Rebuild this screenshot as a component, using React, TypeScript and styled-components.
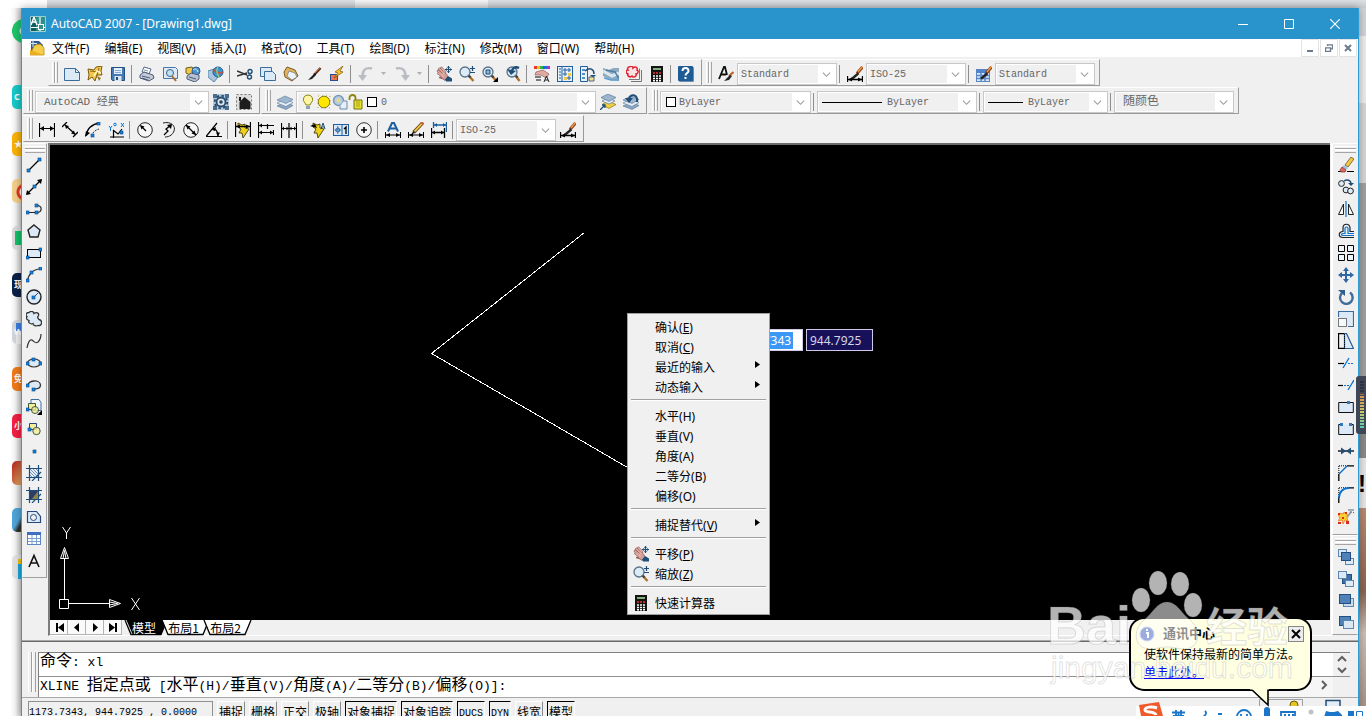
import React from "react";
import styled, { createGlobalStyle, css } from "styled-components";

const face = "#f0f0f0";
const uiFont = '"Noto Sans", "Noto Sans CJK SC", sans-serif';
const songFont = '"Liberation Mono", "Noto Sans CJK SC", monospace';

const GlobalStyle = createGlobalStyle`
  * { box-sizing: border-box; }
  body { margin: 0; background: #fff; font-family: ${uiFont}; font-size: 12px; color: #000; }
  button, select, input { font: inherit; color: inherit; margin: 0; padding: 0; border: 0; background: none; border-radius: 0; }
  svg { display: block; flex: none; }
`;

/* ---------- icons, all on a 16 x 16 grid ---------- */

const navy = "#1f4e79";
const blue = "#0b72d0";
const pale = "#dce9f6";
const gold = "#f2c84b";

const Dot = ({ x, y }: { x: number; y: number }) => (
  <rect x={x} y={y} width="3" height="3" fill="#1287ea" stroke="#07427c" strokeWidth=".6" />
);
const Lens = ({ x = 6, y = 6, r = 5 }: { x?: number; y?: number; r?: number }) => (
  <>
    <path d={`M${x + r * 0.7} ${y + r * 0.7}L14.5 15`} stroke="#b0702a" strokeWidth="2.4" />
    <path d={`M${x + r * 0.7} ${y + r * 0.7}l2 2`} stroke="#444" strokeWidth="2.4" />
    <circle cx={x} cy={y} r={r} fill="#d9ecf8" stroke="#5d7186" strokeWidth="1.3" />
  </>
);
const Brush = () => (
  <>
    <path d="M15.5 1L10 7.5" stroke="#8a3b12" strokeWidth="3" />
    <path d="M15.5 .5L11 6" stroke="#f2a04a" strokeWidth="1.2" />
    <path d="M10.5 6.5L4 12l2 1.5 6-5z" fill="#222" />
  </>
);
const DimLine = ({ y = 13 }: { y?: number }) => (
  <>
    <path d={`M.5 ${y - 3}v6M15.5 ${y - 3}v6M1 ${y}h14`} stroke="#000" />
    <path d={`M1 ${y}l4-2v4zM15 ${y}l-4-2v4z`} />
  </>
);
const Pencil = () => (
  <>
    <path d="M14.5 1L6 10" stroke="#6b4a12" strokeWidth="3.4" />
    <path d="M14 1.5L6.5 9.5" stroke={gold} strokeWidth="1.8" />
    <path d="M15.5 2L13 0" stroke="#d0574b" strokeWidth="2" />
    <path d="M5 8.500L4 12l3.500-1z" fill="#222" />
  </>
);
const Bolt = () => <path d="M3 1l4 2 3-1 0 4 4 1-6 9-1-5-3 0 2-4-3-2z" fill="#ecd21c" stroke="#463b05" strokeWidth=".9" />;
const Layers = () => (
  <>
    <path d="M8 8l8 3.500-7 4L0 12z" fill="#8aa5c2" stroke="#5a7896" strokeWidth=".6" />
    <path d="M8 5l8 3.500-7 4L0 9z" fill="#e6edf5" stroke="#5a7896" strokeWidth=".6" />
    <path d="M8 2l8 3.500-7 4L0 6z" fill="#9db6cf" stroke="#5a7896" strokeWidth=".6" />
  </>
);
const Hatch = ({ fill }: { fill: string }) => (
  <>
    <rect x="3" y="3" width="10" height="10" fill={fill} />
    <path d="M0 3.500h16M0 12.500h16M3.500 0v16M12.500 0v16M6 16L15 7" stroke={navy} strokeWidth="1.2" fill="none" />
  </>
);
const Hand = () => (
  <>
    <g strokeLinecap="round" fill="none">
      <path d="M5.500 2L9 6M3.500 3L8 7.500M2 5l5 4M2.500 7.500L7 10.500" stroke="#96605a" strokeWidth="2.600" />
      <path d="M4 11.500l6 1.500" stroke="#96605a" strokeWidth="2" />
    </g>
    <path d="M7 5.500l4 3 1 3-3 3-4-3z" fill="#d39e96" stroke="#96605a" strokeWidth=".7" />
    <path d="M5.500 2L9 6M3.500 3L8 7.500M2 5l5 4M2.500 7.500L7 10.500" stroke="#e3b2aa" strokeWidth="1.300" strokeLinecap="round" fill="none" />
    <path d="M9 13.500l3-3.500 4 2.500v3h-6z" fill={navy} />
    <path d="M12.500 0v7M9 3.500h7" stroke={navy} strokeWidth="1.200" />
    <path d="M12.500 0l1.500 2h-3zM12.500 7l1.500-2h-3zM9 3.500l2-1.500v3zM16 3.500l-2-1.500v3z" fill={navy} />
  </>
);
const Calc = () => (
  <>
    <rect x="2" y="0" width="12" height="16" fill="#141414" />
    <rect x="4" y="2" width="8" height="2" fill="#7fae7f" />
    <path d="M4 7h2M7 7h2M10 7h2" stroke="#e33" strokeWidth="1.600" />
    <path d="M4 10h2M7 10h2M10 10h2M4 12.500h2M7 12.500h2M10 12.500h2M4 14.700h2M7 14.700h2M10 14.700h2" stroke="#fff" strokeWidth="1.400" />
  </>
);
const OrderBack = () => (
  <>
    <rect x=".5" y=".5" width="8" height="7" fill={pale} stroke="#5d87b0" />
    <rect x="7.500" y="9.500" width="8" height="6" fill={pale} stroke="#5d87b0" />
  </>
);

const glyphs: Record<string, React.ReactNode> = {
  app: (
    <>
      <rect width="16" height="16" fill="#0e5d63" />
      <rect x="6" y="0" width="10" height="16" fill="#2f8f8b" />
      <path d="M1 9L4 1l3 8M2 6h4" stroke="#fff" strokeWidth="1.500" fill="none" />
      <path d="M10 0v16M0 11.500h16" stroke="#fff" strokeWidth="1.200" />
      <rect x="8.500" y="8.500" width="5" height="5" fill="#2f8f8b" stroke="#fff" />
      <path d="M.5 .5h15v15h-15z" stroke="#9fd0d0" fill="none" />
    </>
  ),
  drawing: (
    <>
      <path d="M2 1h8l4 4v9H2z" fill="#315a8c" />
      <path d="M4 0v7M0 3.500h8" stroke="#d7e7f7" />
      <path d="M5 6c4-3 8-2 10 2v7H1z" fill="#f5cf4a" stroke="#c08e10" strokeWidth=".8" />
      <path d="M1 10l14 5H1z" fill="#e9ae1a" />
    </>
  ),
  newdoc: <path d="M.5 2.500h11l4 4v8H.500zM11.500 2.500v4h4" fill={pale} stroke="#3c6c9c" />,
  open: (
    <>
      <path d="M1 3l6 1 2-3 6-1-1 5 1 4-5 0-2 6-3-4-4 3 1-5z" fill={gold} stroke="#7d5a10" />
      <path d="M3 5l8 1-2 6M12 2l-2 7" stroke="#8c6a1a" fill="none" />
      <path d="M7 10l3-5 4 2" stroke="#fff3c4" fill="none" strokeWidth="1.500" />
      <path d="M10 10l4 2-2 3z" fill="#9a7420" />
    </>
  ),
  save: (
    <>
      <path d="M1.500 1.500h13v13h-12l-1-1z" fill="#4779b5" stroke="#244f82" />
      <rect x="4" y="2" width="8" height="6" fill="#e3effa" />
      <path d="M5 4.500h6M5 6.500h6" stroke="#86a9cc" />
      <rect x="4.500" y="10" width="7" height="5" fill="#dfe7ee" />
      <rect x="6" y="11" width="2" height="3" fill={navy} />
    </>
  ),
  print: (
    <>
      <path d="M3 6l2-5 7 2-2 5z" fill="#fff" stroke="#55698a" />
      <path d="M5 4l4 1M4.500 6l4 1" stroke="#8593ab" />
      <path d="M1 9l4-3 9 3 1 3-5 3-9-3z" fill="#c3cbd9" stroke="#4c5a75" />
      <path d="M3 10l8 2M3 12l6 2" stroke="#4c5a75" />
    </>
  ),
  preview: (
    <>
      <path d="M1.500 1.500h12l2 2v9h-14z" fill={pale} stroke="#4878a8" />
      <circle cx="8" cy="7" r="3.500" fill="#bfe2f5" stroke="#41627f" />
      <path d="M10 10l4 5" stroke="#b06a2a" strokeWidth="2" />
    </>
  ),
  publish: (
    <>
      <path d="M1 2l6-1 3 5-5 3-4-2z" fill={gold} stroke="#735a14" />
      <circle cx="11" cy="5" r="4" fill="#4d93cf" stroke="#255c8c" />
      <path d="M8 4c2-2 4-1 5 2" stroke="#e5f3e0" fill="none" />
      <path d="M2 10l4-3 8 2 0 4-4 3-8-3z" fill="#b7c1d2" stroke="#4c5a75" />
      <path d="M4 11l7 2" stroke="#4c5a75" />
    </>
  ),
  dwf: (
    <>
      <path d="M0 5l6-2 4 8-4 5-6-5z" fill="#a9c6df" stroke="#5b87ad" />
      <circle cx="10" cy="6" r="5" fill="#3f8fc9" stroke="#20608f" />
      <path d="M6 4c2 3 6 4 9 2" stroke="#d84a32" strokeWidth="1.500" fill="none" />
      <path d="M10 1c-2 3-1 7 1 10" stroke="#8bd07c" strokeWidth="1.300" fill="none" />
    </>
  ),
  cut: (
    <>
      <path d="M0 5l10 4M0 10l10-3" stroke="#333" strokeWidth="1.400" />
      <circle cx="13" cy="5.500" r="2" fill="none" stroke={navy} strokeWidth="1.400" />
      <circle cx="12.500" cy="11" r="2" fill="none" stroke={navy} strokeWidth="1.400" />
    </>
  ),
  copyclip: (
    <>
      <path d="M.5 1.500h11v9H.500z" fill={pale} stroke="#3c6c9c" />
      <path d="M4.500 5.500h8l3 3v6h-11z" fill={pale} stroke="#3c6c9c" />
    </>
  ),
  paste: (
    <>
      <path d="M4 1l8 3 3 6-6 5-7-4-1-5z" fill="#e0b25a" stroke="#7a5a22" />
      <path d="M6 5l6 2 2 4-5 3-5-4z" fill="#edf3fa" stroke="#7a7f8a" strokeWidth=".8" />
    </>
  ),
  brush: (
    <>
      <path d="M14.500 2L8 9" stroke="#5a2812" strokeWidth="2.500" />
      <path d="M14 2L9 7" stroke="#c9653b" strokeWidth="1" />
      <path d="M9 7L2 14l4-1 4-4z" fill="#1c1c1c" />
    </>
  ),
  block: (
    <>
      <rect x="1.500" y="8.500" width="7" height="6" fill="#e8774f" stroke="#274a9a" />
      <path d="M14 0L6 6l3 1-4 5 9-6-3-1z" fill="#f8c62c" stroke="#7d5208" strokeWidth=".7" />
    </>
  ),
  undo: (
    <>
      <path d="M14 2.500C8 1 4.500 4 4.500 10" stroke="#b9bcc2" strokeWidth="2.400" fill="none" />
      <path d="M0 9h9l-4.500 6z" fill="#b9bcc2" />
    </>
  ),
  redo: (
    <>
      <path d="M2 2.500c6-1.500 9.500 1.500 9.500 7.500" stroke="#b9bcc2" strokeWidth="2.400" fill="none" />
      <path d="M7 9h9l-4.500 6z" fill="#b9bcc2" />
    </>
  ),
  pan: <Hand />,
  zoom: (
    <>
      <Lens />
      <path d="M13.500 0v5M11 2.500h5M11 6.500h5" stroke={navy} strokeWidth="1.200" />
    </>
  ),
  zoomwin: (
    <>
      <Lens />
      <path d="M4 4h4v4H4z" fill="#8fb4d6" stroke={navy} />
      <path d="M16 11v5h-5z" />
    </>
  ),
  zoomprev: (
    <>
      <Lens x={7} />
      <path d="M14 2c-4-2-7 0-7 4" fill="none" stroke={navy} strokeWidth="2.400" />
      <path d="M2 3l4 6 5-4z" fill={navy} />
    </>
  ),
  properties: (
    <>
      <path d="M0 0h3v3H0z" fill="#e33" />
      <path d="M3 0h3v3H3z" fill="#f4c20d" />
      <path d="M6 0h3v3H6z" fill="#2bb24c" />
      <path d="M9 0h4v3H9z" fill="#1e6be0" />
      <path d="M13 0h3v3h-3z" fill="#c128c9" />
      <path d="M2 6l7-2 6 4-3 4-5-3-6 0z" fill="#e0aba2" stroke="#8f5f58" strokeWidth=".7" />
      <path d="M1 11h6M2 14h5" stroke="#555" strokeWidth="1.300" />
      <path d="M10 16l2.500-6 2.500 6M11 14h3" stroke="#222" fill="none" />
    </>
  ),
  design: (
    <>
      <rect x=".5" y=".5" width="15" height="15" fill="#e8f1fa" stroke="#1f5f9f" />
      <path d="M5 1v15" stroke="#1f5f9f" />
      <path d="M2 3h2M2 6h2M2 9h2M2 12h2" stroke="#1f5f9f" strokeWidth="1.200" />
      <path d="M7 3h2v2H7zM11 3h2v2h-2zM7 7h2v2H7zM11 11h2v2h-2z" fill="#fff" stroke="#1f5f9f" />
      <path d="M11 7h3v3h-3zM7 11h3v3H7z" fill={gold} />
    </>
  ),
  palettes: (
    <>
      <path d="M.5 .5h7v15h-7z" fill="#e8f1fa" stroke="#1f5f9f" />
      <path d="M2 3h3v2H2zM2 7h3v2H2zM2 11h3v2H2z" fill="#5b8dbf" />
      <path d="M5 5c5-4 9-2 9 3" stroke={navy} fill="none" strokeWidth="1.500" />
      <path d="M10 9h6l-3 3z" fill={navy} />
      <path d="M9 11h5v4H9z" fill="#f4e08a" stroke="#4b6b8b" />
    </>
  ),
  sheets: (
    <>
      <path d="M0 2l6 2 4-2h6v13l-9-1-7-4z" fill="#8fa9bd" />
      <path d="M0 5l9 5 7-3" stroke="#dbe8f1" strokeWidth="3" fill="none" />
      <path d="M3 4l9 2 4 7" stroke="#4f7fa6" strokeWidth="1.500" fill="none" />
      <path d="M1 12l7 2 8 0" stroke="#5fa0d0" strokeWidth="1.500" fill="none" />
    </>
  ),
  markup: (
    <>
      <path d="M13.500 2.500v11H3M15.500 4v11.500H5" stroke="#777" fill="none" />
      <path d="M3 1c1-1 4-1 4 1 2-2 5-1 4 2 2 1 1 4-1 4 1 3-3 4-4 2-2 2-5 0-4-2-3-1-2-4 0-4-1-1 0-3 1-3z" fill="#fbe3e5" stroke="#e0202c" strokeWidth="1.500" />
    </>
  ),
  calc: <Calc />,
  help: (
    <>
      <rect x="1" y="1" width="15" height="15" rx="1" fill="#6c8db0" />
      <rect x="0" y="0" width="15" height="15" rx="1" fill="#1d5c94" />
      <path d="M4.500 5c0-4 6-4 6 0 0 2-3 2-3 4.500M7.500 11v2" stroke="#fff" strokeWidth="2" fill="none" />
    </>
  ),
  textstyle: (
    <>
      <path d="M1 13L6 1h1l2 8M3 8.500h5" stroke="#111" strokeWidth="1.800" fill="none" />
      <path d="M15.500 6L11 10" stroke="#c0622a" strokeWidth="2.200" />
      <path d="M12 9l-6 6 5-1 3-4z" fill="#222" />
    </>
  ),
  dimstyle: (
    <>
      <Brush />
      <path d="M.5 10v6M15.500 10v6M1 13.500h14" stroke="#000" strokeWidth="1.300" />
      <path d="M1 13.500l4-2v4zM15 13.500l-4-2v4z" />
    </>
  ),
  tablestyle: (
    <>
      <rect x=".5" y="3.500" width="13" height="12" fill="#d9e7f8" stroke="#5b86c4" />
      <path d="M1 4h12v3H1z" fill="#4e83cf" />
      <path d="M1 9.500h12M1 12.500h12M5 7v8M9 7v8" stroke="#5b86c4" strokeWidth="1.500" />
      <Brush />
    </>
  ),
  gear: (
    <>
      <rect width="16" height="16" fill="#b4c8da" />
      <path d="M0 0h4v4H0zM12 0h4v4h-4zM0 12h4v4H0zM12 12h4v4h-4z" fill="#4b6f92" />
      <circle cx="8" cy="8" r="4.500" fill="#dce6ef" stroke="#27496b" strokeWidth="1.800" />
      <circle cx="8" cy="8" r="6.300" fill="none" stroke="#27496b" strokeWidth="1.800" strokeDasharray="2.500 2.400" />
      <circle cx="8" cy="8" r="1.800" fill="#27496b" />
    </>
  ),
  myspace: (
    <>
      <rect x=".5" y=".5" width="15" height="15" fill="#ddd" stroke="#777" strokeDasharray="2 2" />
      <path d="M8.500 3l6 5v7h-11V8z" fill="#1d1d1d" />
      <path d="M3 3h2v4H3z" fill="#1d1d1d" />
    </>
  ),
  layers: <Layers />,
  layercur: (
    <>
      <path d="M8 7l8 3.500-7 4-7-4z" fill="#f0cf45" stroke="#8c7414" strokeWidth=".7" />
      <path d="M8 4l7 3-6 3-7-3z" fill="#eef4fa" stroke="#5a7896" strokeWidth=".7" />
      <path d="M8 0l8 3.500-7 4-8-4z" fill="#9db6cf" stroke="#5a7896" strokeWidth=".7" />
      <path d="M0 16l5-5M2 11h3v3" stroke={navy} strokeWidth="1.300" fill="none" />
    </>
  ),
  layerprev: (
    <>
      <Layers />
      <path d="M14 8C15 0 7-1 6 5" fill="none" stroke={navy} strokeWidth="2" />
      <path d="M2 4h8L6 9z" fill={navy} />
    </>
  ),
  bulb: (
    <>
      <path d="M8 1a4.500 4.500 0 0 1 3 8l-1 2H6L5 9a4.500 4.500 0 0 1 3-8z" fill="#fdf6a4" stroke="#8f8418" />
      <path d="M6 12h4v3H6z" fill="#8da0b4" />
    </>
  ),
  sun: (
    <>
      <path d="M2 2h12v12H2z" fill="none" stroke="#b3a125" strokeDasharray="1 3" />
      <circle cx="8" cy="8" r="5.800" fill="#ffe600" stroke="#8b7c10" />
    </>
  ),
  vpfreeze: (
    <>
      <circle cx="6.500" cy="6.500" r="5" fill="#b3cde4" stroke="#7c97b1" strokeWidth="1.500" />
      <circle cx="6.500" cy="6.500" r="2" fill="#ead978" />
      <path d="M12 7h3v8H8v-3" fill="#e6eef6" stroke="#6c8cab" />
    </>
  ),
  lock: (
    <>
      <path d="M1.500 6V4c0-4 6-4 6 0v4" fill="none" stroke="#8b8712" strokeWidth="1.800" />
      <path d="M6 6h8v9H6z" fill="#e5e02e" stroke="#77730c" />
      <path d="M8 8h4M8 10h4M8 12h4" stroke="#a7a21a" />
    </>
  ),
  dlinear: (
    <>
      <path d="M.5 1v14M15.500 1v14M1 6.500h14" stroke="#000" strokeWidth="1.200" />
      <path d="M1 6.500l4-2.500v5zM15 6.500L11 4v5z" />
    </>
  ),
  daligned: (
    <>
      <path d="M0 5l5-5M11 15l5-5M3 3l10 9" stroke="#000" strokeWidth="1.300" />
      <path d="M3 3l4 1-3 3zM13 12.500l-4-1 3-3z" />
    </>
  ),
  darc: (
    <>
      <path d="M1 14C2 7 7 2 15 1" stroke="#000" fill="none" strokeWidth="1.300" />
      <path d="M7 14c0-3 3-6 7-7" stroke="#333" fill="none" strokeDasharray="2 1" />
      <path d="M0 15l1-6 4 2z" />
      <Dot x={12} y={0} />
      <Dot x={6} y={12} />
    </>
  ),
  dordinate: (
    <>
      <path d="M2 15h14M5.500 8v8M5 8l5 4 4-5" stroke="#000" strokeWidth="1.200" fill="none" />
      <path d="M1 4l1.500 2L4 4M2.500 6v3M13 1l3 4M16 1l-3 4" stroke={blue} fill="none" />
      <circle cx="7" cy="2.500" r="1.300" fill="none" stroke={blue} />
      <Dot x={12} y={9} />
    </>
  ),
  dradius: (
    <>
      <circle cx="8" cy="8" r="7.300" fill="#f7f7f7" stroke="#222" />
      <path d="M4 4l5 5" stroke="#000" strokeWidth="1.300" />
      <path d="M3 3l4.500 1.500L4.500 7.500z" />
    </>
  ),
  djog: (
    <>
      <path d="M3 1c8-2 13 3 11 8-1 3-4 6-9 6" fill="none" stroke="#222" />
      <path d="M4 13l4-4-2-2 5-4" stroke="#000" strokeWidth="1.300" fill="none" />
      <path d="M12 2l-5 1 4 4z" />
    </>
  ),
  ddiam: (
    <>
      <circle cx="8" cy="8" r="7.300" fill="#f7f7f7" stroke="#222" />
      <path d="M3 3l10 10" stroke="#000" strokeWidth="1.300" />
      <path d="M3 3l4.500 1.500L4.500 7.500zM13 13l-4.500-1.500 3-3z" />
    </>
  ),
  dangular: (
    <>
      <path d="M11 1L0 14.500h16M6 7c4-1 6 3 6 7" stroke="#000" strokeWidth="1.200" fill="none" />
      <path d="M5 7.500l5-2.500-1 4zM12 14.500l-2-4h4z" />
    </>
  ),
  dquick: (
    <>
      <Bolt />
      <path d="M.5 0v15M15.500 0v15M1 4.500h14" stroke="#000" strokeWidth="1.300" />
      <path d="M1 4.500l4-2v4zM15 4.500l-4-2v4z" />
    </>
  ),
  dbase: (
    <>
      <path d="M.5 0v16M9.500 2v5M15.500 8v5M1 3.500h15M1 10.500h14" stroke="#000" strokeWidth="1.200" />
      <path d="M1 10.500l3-2v4zM15 10.500l-3-2v4z" />
      <path d="M1 3.500l3-2v4z" />
    </>
  ),
  dcont: (
    <>
      <path d="M.5 1v15M8 1v15M15.500 1v15M1 6.500h14" stroke="#000" strokeWidth="1.200" />
      <path d="M1 6.500l2-2v4zM7.500 6.500l-2-2v4zM8.500 6.500l2-2v4zM15 6.500l-2-2v4z" />
    </>
  ),
  leader: (
    <>
      <Bolt />
      <path d="M0 4l5-2 2 4z" />
      <path d="M11 7l2-6 2 6M12 5h2" stroke={navy} fill="none" />
    </>
  ),
  tolerance: (
    <>
      <rect x=".5" y="2.500" width="15" height="11" fill="#dbe8f5" stroke="#1f5f9f" />
      <path d="M9 3v10" stroke="#1f5f9f" />
      <circle cx="4.800" cy="8" r="2" fill="none" stroke="#1f5f9f" />
      <path d="M4.800 4v8M1.500 8h7" stroke="#1f5f9f" strokeWidth=".8" />
      <path d="M11 7l2-2v7" stroke="#000" strokeWidth="1.300" fill="none" />
    </>
  ),
  center: (
    <>
      <circle cx="8" cy="8" r="7.300" fill="#f5f5f5" stroke="#333" />
      <path d="M8 5v6M5 8h6" stroke="#000" strokeWidth="1.600" />
    </>
  ),
  dimedit: (
    <>
      <path d="M3 9.500L7 1h2l4 8.500M5 6.500h6" stroke="#1f5f9f" strokeWidth="2" fill="none" />
      <DimLine />
    </>
  ),
  dimtedit: (
    <>
      <Pencil />
      <DimLine />
    </>
  ),
  dimupdate: (
    <>
      <path d="M2.500 0v6M15.500 0v10M3 3h12" stroke="#1f5f9f" strokeWidth="1.300" />
      <path d="M3 3l3-2v4zM15 3l-3-2v4z" fill="#1f5f9f" />
      <path d="M.5 6v10M13.500 6v10M1 10.500h12" stroke="#000" strokeWidth="1.300" />
      <path d="M1 10.500l3-2v4zM13 10.500l-3-2v4z" />
    </>
  ),
  line: (
    <>
      <path d="M3 13L13 3" stroke="#000" strokeWidth="1.200" />
      <Dot x={1} y={12} />
      <Dot x={12} y={1} />
    </>
  ),
  xline: (
    <>
      <path d="M1 15L15 1" stroke="#000" strokeWidth="1.200" />
      <path d="M0 16l1-5 4 4zM16 0l-5 1 4 4z" />
      <Dot x={7} y={6} />
    </>
  ),
  pline: (
    <>
      <path d="M2 11.500h9c5 0 6-7 0-7" stroke="#222" strokeWidth="1.200" fill="none" />
      <Dot x={0} y={10} />
      <Dot x={9} y={10} />
      <Dot x={9} y={3} />
    </>
  ),
  polygon: <path d="M8 2l6 5-2 7H4L2 7z" fill={pale} stroke="#222" strokeWidth="1.400" />,
  rectangle: (
    <>
      <rect x="1.500" y="4.500" width="13" height="8" fill={pale} stroke="#000" />
      <Dot x={0} y={11} />
      <Dot x={13} y={3} />
    </>
  ),
  arc: (
    <>
      <path d="M1.500 14C2 8 7 2 14 2" stroke="#333" fill="none" strokeWidth="1.200" />
      <Dot x={0} y={12} />
      <Dot x={4} y={4} />
      <Dot x={13} y={0} />
    </>
  ),
  circle: (
    <>
      <circle cx="8" cy="8" r="7" fill={pale} stroke="#222" strokeWidth="1.400" />
      <path d="M8 8l4-4" stroke="#0d4e8f" />
      <Dot x={6} y={7} />
    </>
  ),
  cloud: <path d="M3 1.500c2-2 5-1 5 1 3-2 6 0 4 3-1 1 0 2 1 3 4 1 3 7-1 6-2 1-5 0-5-2-3 1-5-1-4-3-3-1-3-3-2-4-2-1-1-4 2-4z" fill={pale} stroke="#333" strokeWidth="1.300" />,
  spline: <path d="M1 15C2 9 4 6 6 7c3 2 3 4 6 2 2-2 3-4 3-8" stroke="#333" strokeWidth="1.200" fill="none" />,
  ellipse: (
    <>
      <ellipse cx="8" cy="8" rx="6.500" ry="4" fill={pale} stroke="#333" strokeWidth="1.200" />
      <Dot x={6} y={3} />
      <Dot x={0} y={7} />
      <Dot x={13} y={7} />
    </>
  ),
  elliparc: (
    <>
      <path d="M2 9C1 3 14 2 14.500 8c0 2-2 4-6 4" stroke="#333" fill={pale} strokeWidth="1.300" />
      <Dot x={0} y={7} />
      <Dot x={6} y={11} />
    </>
  ),
  insert: (
    <>
      <path d="M5 .5h8l2 3v8H5z" fill="#eef4fa" stroke="#3c6c9c" />
      <path d="M2.500 4.500h7v6h-7z" fill="#f6ee9a" stroke="#3c5a3c" />
      <circle cx="9" cy="11" r="3.500" fill="#f6ee9a" stroke="#3c5a3c" fillOpacity=".8" />
      <path d="M16 11v5h-5z" />
      <Dot x={0} y={9} />
    </>
  ),
  makeblock: (
    <>
      <path d="M3.500 2.500h7v6h-7z" fill="#f6ee9a" stroke="#27497b" />
      <circle cx="10.500" cy="10" r="3.700" fill="#f6ee9a" fillOpacity=".8" stroke="#3c5a3c" />
      <Dot x={2} y={7} />
    </>
  ),
  point: <Dot x={7} y={7} />,
  hatch: (
    <>
      <Hatch fill="#e8f1fa" />
      <path d="M4 4l8 8M7 4l5 5M4 7l5 5M10 4l2 2M4 10l2 2" stroke="#4f7ba8" strokeWidth=".8" />
    </>
  ),
  gradient: (
    <>
      <Hatch fill="#2d3d66" />
      <path d="M12 4v8H6z" fill="#8d8447" />
    </>
  ),
  region: (
    <>
      <path d="M1.500 2.500h9l4 5v6h-13z" fill={pale} stroke="#27497b" strokeWidth="1.200" />
      <circle cx="7.500" cy="8.500" r="3" fill="#f0f0f0" stroke="#27497b" />
    </>
  ),
  table: (
    <>
      <rect x="1.500" y="1.500" width="13" height="12" fill="#fff" stroke="#5b86c4" />
      <path d="M1 1h14v3H1z" fill="#3e6fc0" />
      <path d="M2 7.500h12M2 10.500h12M6 4v9M10.500 4v9" stroke="#7ba0d4" />
    </>
  ),
  mtext: <path d="M3 14L8 2.500 13 14M5 10h6" stroke="#111" strokeWidth="1.600" fill="none" />,
  erase: (
    <>
      <path d="M0 14.500h5M9 14.500h7" stroke="#000" />
      <path d="M7 8l6-8 3 2-6 8z" fill={gold} stroke="#6d5513" strokeWidth=".8" />
      <path d="M6 8l4 3-2 2-4-3z" fill="#9cc0e6" />
      <path d="M4 10l4 3-1 2H3l-1-2z" fill="#df6b5f" stroke="#7c2a24" strokeWidth=".7" />
    </>
  ),
  copy: (
    <>
      <circle cx="3.500" cy="4.500" r="2.900" fill={pale} stroke="#222" />
      <circle cx="8" cy="11" r="2.900" fill={pale} stroke="#222" />
      <circle cx="12.500" cy="12" r="2.900" fill={pale} stroke="#222" />
      <path d="M6 2c3-2 7-1 7 3" stroke={navy} strokeWidth="1.500" fill="none" />
      <path d="M10 4h6l-3 3z" fill={navy} />
    </>
  ),
  mirror: (
    <>
      <path d="M5.500 3v10.500H.500zM10.500 3v10.500h5z" fill="#f8f8f8" stroke="#222" />
      <path d="M8 0v16" stroke={blue} strokeWidth="1.200" />
    </>
  ),
  offset: (
    <>
      <path d="M16 8.500h-4V5c0-5-7-5-7 0v3.500c-5 0-5 6 0 6h11" fill="none" stroke="#222" strokeWidth="1.200" />
      <path d="M16 10.500h-6V5.500c0-2-3-2-3 0v5H5c-2 0-2 2 0 2h11" stroke={blue} fill="none" strokeWidth="1.200" />
    </>
  ),
  array: <path d="M.5 .5h6v6h-6zM9.500 .5h6v6h-6zM.5 9.500h6v6h-6zM9.500 9.500h6v6h-6z" fill="#eef5fb" stroke="#000" />,
  move: (
    <>
      <path d="M8 2v12M2 8h12" stroke="#2f66a3" strokeWidth="2" />
      <path d="M8 0l3 4H5zM8 16l3-4H5zM0 8l4-3v6zM16 8l-4-3v6z" fill="#2f66a3" />
    </>
  ),
  rotate: (
    <>
      <path d="M12 3.500A6.300 6.300 0 1 1 4 4" stroke="#3f6d9c" strokeWidth="2.400" fill="none" />
      <path d="M0 1h7v6z" fill="#2f5d8c" />
    </>
  ),
  scale: (
    <>
      <path d="M.5 6V.500h15v15H10" fill={pale} stroke="#3c6c9c" strokeWidth="1.200" />
      <path d="M.5 7.500h8v8h-8z" fill="#f7fafd" stroke="#000" strokeDasharray="1 1" />
    </>
  ),
  stretch: (
    <>
      <path d="M6.500 .5h2l7 15h-9z" fill={pale} stroke="#27598c" strokeWidth="1.200" />
      <path d="M6 .5H.500v15H6" fill="none" stroke="#000" strokeWidth="1.300" />
      <path d="M6.500 1v15" stroke="#000" strokeDasharray="1 1" />
    </>
  ),
  trim: (
    <>
      <path d="M0 8.500h6" stroke="#000" strokeWidth="1.200" />
      <path d="M10 8.500h6" stroke={blue} strokeDasharray="2 1" />
      <path d="M5 13L11 3" stroke={blue} strokeWidth="1.300" />
    </>
  ),
  extend: (
    <>
      <path d="M0 8.500h5" stroke="#000" strokeWidth="1.200" />
      <path d="M6 8.500h6" stroke={blue} strokeDasharray="2 1" />
      <path d="M10 13l6-10" stroke={blue} strokeWidth="1.300" />
    </>
  ),
  breakpt: (
    <>
      <path d="M.7 3.500h14.600v10H.700z" fill={pale} stroke="#111" />
      <rect x="9" y="2" width="3" height="3" fill="#2f79c4" />
    </>
  ),
  breaks: (
    <>
      <path d="M3 3.500H.700v10h14.600v-10H13" fill={pale} stroke="#111" />
      <path d="M2 2h3v3H2zM11 2h3v3h-3z" fill="#2f79c4" />
    </>
  ),
  join: (
    <>
      <path d="M0 8h16" stroke="#111" strokeWidth="1.400" />
      <path d="M3 4.500L8 8l-5 3.500zM13 4.500L8 8l5 3.500z" fill={navy} />
    </>
  ),
  chamfer: (
    <>
      <path d="M1 .8h8M.8 1v8" stroke="#000" strokeDasharray="1 1" />
      <path d="M9 .8h7M.8 9v7" stroke="#000" strokeWidth="1.300" />
      <path d="M1 9l8-8" stroke={blue} strokeWidth="1.400" />
    </>
  ),
  fillet: (
    <>
      <path d="M1 .8h9M.8 1v9" stroke="#000" strokeDasharray="1 1" />
      <path d="M10 .8h6M.8 10v6" stroke="#000" strokeWidth="1.300" />
      <path d="M1 11C1 5 5 1 11 1" stroke={blue} strokeWidth="1.800" fill="none" />
    </>
  ),
  explode: (
    <>
      <path d="M2 4l3 1 1-2 2 2 2 1-1 3 1 3-3-1-2 4-1-4-4 1 2-3-2-3z" fill="#ffcf2b" stroke="#e8752a" strokeWidth=".8" />
      <path d="M0 4h2v2H0zM7 3h2v2H7zM0 13h3v2H0zM8 12h3v3H8zM4 8h2v2H4z" fill="#d82c1c" />
      <path d="M9 8l4-5" stroke="#9b9b9b" strokeWidth="2" />
      <path d="M13 0v4M10 1h2M15 3l1 1M14 1l2 0" stroke="#567" />
    </>
  ),
  tofront: (
    <>
      <OrderBack />
      <rect x="3.500" y="3.500" width="9" height="8" fill="#4f83b8" stroke="#234f80" />
    </>
  ),
  toback: (
    <>
      <rect x="4.500" y="3.500" width="9" height="9" fill="#3f6fa3" stroke="#234f80" />
      <OrderBack />
    </>
  ),
  above: (
    <>
      <rect x="5.500" y="5.500" width="10" height="8" fill="#c9dcee" stroke="#5d87b0" />
      <rect x="1.500" y="1.500" width="11" height="9" fill="#4f83b8" stroke="#234f80" />
    </>
  ),
  under: (
    <>
      <rect x="1.500" y="1.500" width="11" height="9" fill="#4f83b8" stroke="#234f80" />
      <rect x="5.500" y="5.500" width="10" height="8" fill="#d9e7f4" stroke="#5d87b0" />
    </>
  ),
};

const Icon = ({ name }: { name: string }) => (
  <svg width="16" height="16" viewBox="0 0 16 16" aria-hidden="true">
    {glyphs[name]}
  </svg>
);

/* ---------- desktop behind the window ---------- */

const Desktop = styled.div`
  position: relative;
  height: 100vh;
  overflow: hidden;
  display: grid;
  grid-template: "top top top" 8px "left app right" minmax(0, 1fr) / 21px minmax(0, 1fr) 7px;
  background: #fff;
`;
const BrowserTop = styled.div`
  grid-area: top;
  display: flex;
  margin-left: 47px;
  background: linear-gradient(#dcdfe3, #c8cbcf);
`;
const BrowserTab = styled.div`
  width: 133px;
  margin-left: 308px;
  background: linear-gradient(#f4f4f5, #dcdddf);
`;
const Dock = styled.div`
  grid-area: left;
  display: flex;
  flex-direction: column;
  gap: 23px;
  padding: 11px 0 0 12px;
  overflow: hidden;
  background: linear-gradient(90deg, #fff 10px, #f4f4f4 15px, #cfcfcf);
  & > :first-child { margin-bottom: 19px; border-radius: 12px; }
`;
const DockTile = styled.div<{ $bg: string }>`
  width: 24px;
  height: 24px;
  flex: none;
  border-radius: 5px;
  padding: 4px 2px;
  background: ${(p) => p.$bg};
  color: #fff;
  font-size: 9px;
  line-height: 16px;
  font-weight: 700;
  white-space: nowrap;
`;
const Behind = styled.div`
  grid-area: right;
  display: grid;
  grid-template-rows: 28px 67px 80px 193px 58px 24px 50px 1fr;
`;
const Slice = styled.div<{ $bg: string }>`
  background: ${(p) => p.$bg};
  overflow: hidden;
  padding-top: 12px;
  font: 700 24px/28px "Liberation Sans", sans-serif;
  text-indent: -1px;
`;
const Meter = styled.div`
  position: absolute;
  right: 0;
  top: 376px;
  width: 10px;
  height: 58px;
  padding: 5px 2px 5px 4px;
  border-radius: 3px 0 0 3px;
  background: #3f4657;
  &::before {
    content: "";
    display: block;
    height: 100%;
    background: repeating-linear-gradient(transparent 0 2px, #3f4657 2px 3px), linear-gradient(#2c3240 25%, #d9914e 30%, #c9c66a, #4fd0b4);
  }
`;

/* ---------- application window ---------- */

const Window = styled.div`
  grid-area: app;
  display: flex;
  flex-direction: column;
  min-height: 0;
  border: solid #2f9bd3;
  border-width: 0 1px;
  background: ${face};
  box-shadow: 0 0 8px rgba(0, 0, 0, 0.35);
`;
const TitleBar = styled.header`
  display: flex;
  align-items: center;
  height: 31px;
  flex: none;
  padding-left: 8px;
  gap: 5px;
  background: #2993cc;
  color: #fff;
`;
const Title = styled.h1`
  flex: 1;
  margin: 0;
  font-size: 12px;
  font-weight: 400;
`;
const CaptionButton = styled.button`
  width: 46px;
  height: 31px;
  display: flex;
  align-items: center;
  justify-content: center;
`;
const Captions = styled.div`
  display: flex;
`;
const MenuBar = styled.nav`
  display: flex;
  align-items: center;
  height: 18px;
  flex: none;
  padding-left: 7px;
  background: #fff;
`;
const Menus = styled.div`
  display: flex;
  flex: 1;
  gap: 15px;
  padding-left: 7px;
`;
const MenuButton = styled.button`
  height: 18px;
  line-height: 18px;
  padding-top: 1px;
  white-space: nowrap;
`;
const MdiButton = styled.button`
  width: 18px;
  height: 18px;
  margin-right: 1px;
  border: 1px solid #e3e3e3;
  display: flex;
  align-items: center;
  justify-content: center;
`;

const ToolRows = styled.div`
  flex: none;
  padding: 2px 0 0 1px;
`;
const ToolRow = styled.div<{ $indent?: boolean }>`
  display: flex;
  gap: ${(p) => (p.$indent ? 0 : 1)}px;
  height: 28px;
  padding-left: ${(p) => (p.$indent ? 25 : 0)}px;
`;
const Toolbar = styled.div`
  display: flex;
  align-items: center;
  height: 27px;
  padding: 3px 4px 0 11px;
  border: 1px solid;
  border-color: #fff #9a9a9a #9a9a9a transparent;
  position: relative;
  &::before {
    content: "";
    position: absolute;
    left: 3px;
    top: 2px;
    bottom: 2px;
    width: 6px;
    background: linear-gradient(90deg, #fff 1px, ${face} 1px 2px, #a5a5a5 2px 3px, #fff 3px 4px, ${face} 4px 5px, #a5a5a5 5px);
  }
`;
const ToolButton = styled.button<{ $narrow?: boolean }>`
  width: ${(p) => (p.$narrow ? 13 : 23)}px;
  height: 22px;
  flex: none;
  display: flex;
  align-items: center;
  justify-content: center;
`;
const Divider = styled.span`
  width: 6px;
  height: 18px;
  flex: none;
  background: linear-gradient(90deg, transparent 2px, #8f8f8f 2px 3px, transparent 3px);
`;
const ComboFrame = styled.span<{ $w: number }>`
  display: flex;
  align-items: center;
  width: ${(p) => p.$w}px;
  height: 22px;
  flex: none;
  border: 1px solid #c8c8c8;
  background: #fff;
  padding: 1px;
`;
const ComboBody = styled.span`
  display: flex;
  align-items: center;
  flex: 1;
  min-width: 0;
  height: 18px;
  padding-left: 2px;
  background: ${face};
`;
const ComboSelect = styled.select<{ $pad: number; $size: number }>`
  appearance: none;
  flex: 1;
  min-width: 0;
  height: 18px;
  padding-left: ${(p) => p.$pad}px;
  font-family: ${songFont};
  font-size: ${(p) => p.$size}px;
  color: #666;
`;
const ComboArrow = styled.span`
  width: 17px;
  display: flex;
  justify-content: center;
  pointer-events: none;
`;
const Swatch = styled.span`
  width: 10px;
  height: 10px;
  margin-left: 2px;
  flex: none;
  border: 1px solid #000;
  background: #fff;
`;
const LineSample = styled.span<{ $w: number }>`
  width: ${(p) => p.$w}px;
  height: 1px;
  margin-left: 1px;
  flex: none;
  background: #000;
`;
const LayerState = styled.span`
  display: flex;
  width: 65px;
`;

const Chevron = ({ turn = 0, color = "#9a9a9a", size = 9 }: { turn?: number; color?: string; size?: number }) => (
  <svg width={size} height={size} viewBox="0 0 10 10" aria-hidden="true">
    <path d="M1 3l4 4 4-4" fill="none" stroke={color} strokeWidth={size > 9 ? 2 : 1.2} transform={`rotate(${turn} 5 5)`} />
  </svg>
);

type ComboProps = { label: string; value: string; w: number; pad?: number; size?: number; children?: React.ReactNode };
const Combo = ({ label, value, w, pad = 0, size = 10, children }: ComboProps) => (
  <ComboFrame $w={w}>
    <ComboBody>
      {children}
      <ComboSelect aria-label={label} $pad={pad} $size={size}>
        <option>{value}</option>
      </ComboSelect>
    </ComboBody>
    <ComboArrow>
      <Chevron />
    </ComboArrow>
  </ComboFrame>
);

const Tools = ({ names }: { names: string }) => (
  <>
    {names.split(" ").map((n, i) => {
      if (n === "|") return <Divider key={i} />;
      if (n === "v")
        return (
          <ToolButton key={i} $narrow aria-label="history">
            <svg width="5" height="4" viewBox="0 0 5 4" aria-hidden="true">
              <path d="M0 0h5L2.500 3z" fill="#aeb0b8" />
            </svg>
          </ToolButton>
        );
      return (
        <ToolButton key={i} aria-label={n}>
          <Icon name={n} />
        </ToolButton>
      );
    })}
  </>
);

/* ---------- drawing area ---------- */

const Main = styled.div`
  flex: 1;
  min-height: 0;
  display: grid;
  grid-template: minmax(0, 1fr) / 26px minmax(0, 1fr) 26px;
`;
const Side = styled.div`
  display: flex;
  flex-direction: column;
  padding-left: 0;
  & > div + div { padding-bottom: 0; }
`;
const Palette = styled.div<{ $right?: boolean }>`
  position: relative;
  width: 25px;
  padding: 10px 1px 5px 0;
  border: 1px solid;
  border-color: #fff #a0a0a0 #a0a0a0 transparent;
  ${(p) =>
    p.$right &&
    css`
      width: 26px;
      padding: 10px 0 6px 1px;
      border-color: #fff transparent #a0a0a0 #fff;
    `}
  &::before {
    content: "";
    position: absolute;
    left: 2px;
    right: 1px;
    top: 2px;
    height: 7px;
    background: linear-gradient(#fff 1px, ${face} 1px 2px, #a5a5a5 2px 3px, #fff 3px 5px, ${face} 5px 6px, #a5a5a5 6px);
  }
`;
const PaletteButton = styled.button`
  width: 100%;
  height: 22px;
  display: flex;
  align-items: center;
  justify-content: center;
`;
const Sheet = styled.div`
  display: flex;
  flex-direction: column;
  min-height: 0;
  border-left: 2px solid #7c7c7c;
  border-right: 1px solid #fff;
  border-bottom: 1px solid #fff;
  padding-right: 1px;
`;
const Canvas = styled.div`
  position: relative;
  flex: 1;
  min-height: 0;
  border-top: 2px solid #6c6c6c;
  background: #000;
`;
const Strokes = styled.svg`
  position: absolute;
  inset: 0;
  width: 100%;
  height: 100%;
`;
const Ucs = styled.svg`
  position: absolute;
  left: 0;
  bottom: 0;
`;
const DynField = styled.input<{ $active?: boolean }>`
  position: absolute;
  left: ${(p) => (p.$active ? 679 : 756)}px;
  top: 184px;
  width: ${(p) => (p.$active ? 74 : 67)}px;
  height: 22px;
  padding-left: 3px;
  border: 1px solid #cfc8e6;
  background: #17115a;
  color: #d8d5e6;
  font-size: 12px;
  ${(p) =>
    p.$active &&
    css`
      background: linear-gradient(#3b97f5, #3b97f5) 0 2px / 63px 17px no-repeat, #fff;
      color: #fff;
    `}
`;
const ContextMenu = styled.div`
  position: absolute;
  left: 577px;
  top: 168px;
  width: 143px;
  padding: 3px 1px 1px;
  border: 1px solid #a0a0a0;
  background: ${face};
`;
const ContextItem = styled.button`
  display: grid;
  grid-template-columns: 26px 1fr 13px;
  align-items: center;
  width: 100%;
  height: 20px;
  padding-bottom: 1px;
  text-align: left;
  white-space: nowrap;
  & > svg:first-child { margin-left: 4px; }
`;
const ContextRule = styled.hr`
  height: 2px;
  margin: 2px 2px 5px;
  border: 0;
  background: linear-gradient(#a0a0a0 1px, #fff 1px);
`;

const TabRow = styled.div`
  display: flex;
  height: 15px;
  flex: none;
`;
const NavButton = styled.button`
  width: 18px;
  height: 15px;
  border-right: 1px solid #b4b4b4;
  border-bottom: 1px solid #b4b4b4;
  background: #fafafa;
  display: flex;
  align-items: center;
  justify-content: center;
`;
const TabList = styled.div`
  display: flex;
  padding-left: 4px;
`;
const Tab = styled.button<{ $w: number; $on?: boolean }>`
  position: relative;
  width: ${(p) => p.$w}px;
  height: 15px;
  padding-right: 1px;
  line-height: 13px;
  white-space: nowrap;
  font-family: "Noto Sans CJK SC", sans-serif;
  color: ${(p) => (p.$on ? "#fff" : "#000")};
  & > svg { position: absolute; left: 0; top: 0; overflow: visible; }
  & > span { position: relative; }
`;

/* ---------- command line and status ---------- */

const Splitter = styled.div`
  height: 16px;
  flex: none;
  background: linear-gradient(#f0f0f0 4px, #a8a8a8 4px 5px, #696969 5px 6px, #f0f0f0 6px);
`;
const CommandArea = styled.div`
  display: flex;
  height: 45px;
  flex: none;
  padding: 0 8px 0 6px;
`;
const CommandGrip = styled.div`
  width: 8px;
  height: 40px;
  margin-right: 2px;
  background: linear-gradient(90deg, #fff 1px, ${face} 1px 3px, #a0a0a0 3px 4px, #fff 4px 5px, ${face} 5px 7px, #a0a0a0 7px);
`;
const CommandBox = styled.div`
  flex: 1;
  min-width: 0;
  border: solid #808080;
  border-width: 1px 0 0 1px;
  display: grid;
  grid-template: 24px 20px / minmax(0, 1fr) 17px;
`;
const CommandText = styled.div<{ $input?: boolean }>`
  background: #fff;
  padding-left: 1px;
  font-family: "Noto Sans CJK SC", sans-serif;
  font-size: 16px;
  line-height: 12px;
  white-space: nowrap;
  border-bottom: ${(p) => (p.$input ? 0 : 1)}px solid #909090;
`;
const Latin = styled.span<{ $size: number }>`
  font-family: "Liberation Mono", monospace;
  font-size: ${(p) => p.$size}px;
`;
const ScrollStack = styled.div`
  display: flex;
  flex-direction: column;
  align-items: center;
  justify-content: space-around;
  border-bottom: 1px solid #909090;
`;
const InputRow = styled.div`
  display: flex;
  background: #fff;
`;
const HScroll = styled.div`
  width: 70px;
  display: flex;
  align-items: center;
  justify-content: flex-end;
  padding: 0 4px 4px 0;
  margin-left: auto;
  background: #f6f6f6;
`;
const StatusBar = styled.footer`
  display: flex;
  gap: 4px;
  height: 19px;
  flex: none;
  overflow: hidden;
  padding: 3px 0 0 6px;
  border-top: 1px solid #a8a8a8;
`;
const Coordinates = styled.output`
  width: 185px;
  height: 22px;
  flex: none;
  border: 1px solid #909090;
  line-height: 18px;
  white-space: pre;
`;
const StatusButton = styled.button<{ $w: number; $on?: boolean }>`
  width: ${(p) => p.$w}px;
  height: 22px;
  flex: none;
  border: 1px solid;
  border-color: ${(p) => (p.$on ? "#000 #fff #fff #000" : "#fff #8a8a8a #8a8a8a #fff")};
  font-family: "Noto Sans CJK SC", sans-serif;
  line-height: 18px;
  white-space: nowrap;
`;

/* Han characters take the surrounding size, half-width runs use the monospaced face. */
const Song = ({ text, size }: { text: string; size: number }) => (
  <>
    {text.split(/([\x20-\x7e]+)/).map((part, i) =>
      /^[\x20-\x7e]+$/.test(part) ? (
        <Latin key={i} $size={size}>
          {part}
        </Latin>
      ) : (
        part
      )
    )}
  </>
);

/* ---------- balloon, input-method bar, watermark ---------- */

const Balloon = styled.aside`
  position: absolute;
  right: 54px;
  bottom: 25px;
  width: 183px;
  height: 74px;
  padding: 7px 6px 0 13px;
  border: 2px solid #000;
  border-radius: 15px;
  background: #ffffe1;
  line-height: 18px;
  font-family: "Noto Sans CJK SC", sans-serif;
`;
const BalloonTail = styled.svg`
  position: absolute;
  right: 38px;
  top: 70px;
`;
const BalloonHead = styled.div`
  display: flex;
  align-items: flex-start;
  justify-content: space-between;
  height: 18px;
  margin-bottom: 1px;
  padding-left: 19px;
  position: relative;
  & > svg { position: absolute; left: -5px; top: 0; }
  & > strong { font-size: 13px; line-height: 14px; }
`;
const BalloonClose = styled.button`
  width: 16px;
  height: 16px;
  border: 1px solid #888;
  background: #ececec;
  display: flex;
  align-items: center;
  justify-content: center;
`;
const BalloonLink = styled.a`
  color: #0000ff;
`;
const BalloonText = styled.p`
  margin: 0;
  white-space: nowrap;
`;
const ImeBar = styled.div`
  position: absolute;
  right: 0;
  bottom: 0;
  width: 230px;
  height: 10px;
  padding-left: 36px;
  background: #fff;
  color: #1b75c9;
  & > svg { overflow: visible; }
`;
const TrayBox = styled.svg`
  position: absolute;
  right: 20px;
  bottom: 10px;
`;
const Watermark = styled.svg`
  position: absolute;
  right: 66px;
  bottom: 20px;
  pointer-events: none;
`;

const menus = ["文件(F)", "编辑(E)", "视图(V)", "插入(I)", "格式(O)", "工具(T)", "绘图(D)", "标注(N)", "修改(M)", "窗口(W)", "帮助(H)"];
const drawTools = "line xline pline polygon rectangle arc circle cloud spline ellipse elliparc insert makeblock point hatch gradient region table mtext".split(" ");
const modifyTools = "erase copy mirror offset array move rotate scale stretch trim extend breakpt breaks join chamfer fillet explode".split(" ");
const orderTools = "tofront toback above under".split(" ");

type Entry = { text: string; key?: string; plainKey?: boolean; icon?: string; sub?: boolean };
const contextGroups: Entry[][] = [
  [{ text: "确认", key: "E" }, { text: "取消", key: "C" }, { text: "最近的输入", sub: true }, { text: "动态输入", sub: true }],
  [
    { text: "水平", key: "H", plainKey: true },
    { text: "垂直", key: "V", plainKey: true },
    { text: "角度", key: "A", plainKey: true },
    { text: "二等分", key: "B", plainKey: true },
    { text: "偏移", key: "O", plainKey: true },
  ],
  [{ text: "捕捉替代", key: "V", sub: true }],
  [{ text: "平移", key: "P", icon: "pan" }, { text: "缩放", key: "Z", icon: "zoom" }],
  [{ text: "快速计算器", icon: "calc" }],
];
const statusModes: { text: string; w: number; on?: boolean }[] = [
  { text: "捕捉", w: 28 },
  { text: "栅格", w: 28 },
  { text: "正交", w: 28 },
  { text: "极轴", w: 28 },
  { text: "对象捕捉", w: 52, on: true },
  { text: "对象追踪", w: 52, on: true },
  { text: "DUCS", w: 28, on: true },
  { text: "DYN", w: 22, on: true },
  { text: "线宽", w: 28 },
  { text: "模型", w: 28, on: true },
];
const dock: [string, string][] = [
  ["radial-gradient(circle, #cdebd8 4px, #1fc46b 5px)", ""],
  ["#17c8c8", "C"],
  ["#f9b208", "★"],
  ["radial-gradient(circle at 13px 13px, #111 2px, #fff 3px 5px, #e6381f 6px 8px, #f3cf8b 9px)", ""],
  ["linear-gradient(90deg, #d9dadb 3px, transparent 3px), linear-gradient(#d9dadb 5px, #12bf6a 5px 19px, #d9dadb 19px)", ""],
  ["#0c2148", "现"],
  ["linear-gradient(90deg, #d3d6da 4px, transparent 4px), linear-gradient(#cfd3da 3px, #3c7de0 3px 11px, #eceef0 11px)", "W"],
  ["#f07a1a", "免"],
  ["#f21f43", "小"],
  ["linear-gradient(120deg, #b3201c, #d99a5a 55%, #b3201c)", ""],
  ["linear-gradient(120deg, #4fa4d8 35%, #2b2a22 50%, #d98f2b)", ""],
  ["linear-gradient(90deg, #e2e2e2 6px, transparent 6px), linear-gradient(#e2e2e2 4px, #f2c318 4px 9px, #1aa9e0 9px)", ""],
];
const navShapes = ["M3 1v9h2V1zM11 1v9L5 5.500z", "M8 1v9L3 5.500z", "M4 1v9l5-4.500z", "M2 1v9l6-4.500zM8 1v9h2V1z"];

const PaletteGroup = ({ names, right }: { names: string[]; right?: boolean }) => (
  <Palette $right={right}>
    {names.map((n) => (
      <PaletteButton key={n} aria-label={n}>
        <Icon name={n} />
      </PaletteButton>
    ))}
  </Palette>
);

const SheetTab = ({ text, w, on }: { text: string; w: number; on?: boolean }) => (
  <Tab $w={w} $on={on}>
    <svg width={w} height="15" aria-hidden="true">
      <path d={`M-1 0L5 14.500H${w - 2}L${w + 4} 0`} fill={on ? "#000" : "#fff"} stroke="#000" strokeWidth="1.300" />
      {on && <path d="M0 0L6 14" stroke="#fff" strokeWidth=".8" />}
    </svg>
    <span>{text}</span>
  </Tab>
);

export default function App() {
  return (
    <>
      <GlobalStyle />
      <Desktop>
        <BrowserTop>
          <BrowserTab />
        </BrowserTop>
        <Dock>
          {dock.map(([bg, label], i) => (
            <DockTile key={i} $bg={bg}>
              {label}
            </DockTile>
          ))}
        </Dock>
        <Behind>
          <Slice $bg="#d0d3d8" />
          <Slice $bg="#ececec" />
          <Slice $bg="#d5d5d5" />
          <Slice $bg="#a0a0a0" />
          <Slice $bg="#c8c8c8" />
          <Slice $bg="#8a8a8a" />
          <Slice $bg="#e6e6e6">!</Slice>
          <Slice $bg="linear-gradient(#b98a72, #8a6450 40%, #cdbfb4 60%, #a58e80)" />
        </Behind>

        <Window>
          <TitleBar>
            <Icon name="app" />
            <Title>AutoCAD 2007 - [Drawing1.dwg]</Title>
            <Captions>
              <CaptionButton aria-label="最小化">
                <svg width="10" height="10"><path d="M0 5.500h10" stroke="#fff" /></svg>
              </CaptionButton>
              <CaptionButton aria-label="最大化">
                <svg width="10" height="10"><path d="M.5 .5h9v9h-9z" stroke="#fff" fill="none" /></svg>
              </CaptionButton>
              <CaptionButton aria-label="关闭">
                <svg width="10" height="10"><path d="M0 0l10 10M10 0L0 10" stroke="#fff" strokeWidth="1.200" /></svg>
              </CaptionButton>
            </Captions>
          </TitleBar>
          <MenuBar>
            <Icon name="drawing" />
            <Menus>
              {menus.map((m) => (
                <MenuButton key={m}>{m}</MenuButton>
              ))}
            </Menus>
            <MdiButton aria-label="最小化图形">
              <svg width="8" height="8"><path d="M1 7h6" stroke="#6b7b8c" strokeWidth="2" /></svg>
            </MdiButton>
            <MdiButton aria-label="还原图形">
              <svg width="8" height="8"><path d="M2.500 2V.8h5v4H6M.5 3.800h5v3.700h-5z" fill="none" stroke="#6b7b8c" strokeWidth="1.300" /></svg>
            </MdiButton>
            <MdiButton aria-label="关闭图形">
              <svg width="8" height="8"><path d="M1 1l6 6M7 1L1 7" stroke="#6b7b8c" strokeWidth="2" /></svg>
            </MdiButton>
          </MenuBar>

          <ToolRows>
            <ToolRow $indent>
              <Toolbar>
                <Tools names="newdoc open save | print preview publish dwf | cut copyclip paste brush block | undo v redo v | pan zoom zoomwin zoomprev | properties design palettes sheets markup calc | help" />
              </Toolbar>
              <Toolbar>
                <Tools names="textstyle" />
                <Combo label="文字样式" value="Standard" w={100} />
                <Divider />
                <Tools names="dimstyle" />
                <Combo label="标注样式" value="ISO-25" w={100} />
                <Divider />
                <Tools names="tablestyle" />
                <Combo label="表格样式" value="Standard" w={100} />
              </Toolbar>
            </ToolRow>
            <ToolRow>
              <Toolbar>
                <Combo label="工作空间" value="AutoCAD 经典" w={174} pad={5} size={11} />
                <Tools names="gear myspace" />
              </Toolbar>
              <Toolbar>
                <Tools names="layers" />
                <Combo label="图层" value="0" w={300} pad={4}>
                  <LayerState>
                    <Icon name="bulb" />
                    <Icon name="sun" />
                    <Icon name="vpfreeze" />
                    <Icon name="lock" />
                  </LayerState>
                  <Swatch />
                </Combo>
                <Tools names="layercur layerprev" />
              </Toolbar>
              <Toolbar>
                <Combo label="颜色" value="ByLayer" w={151} pad={3}>
                  <Swatch />
                </Combo>
                <Divider />
                <Combo label="线型" value="ByLayer" w={160} pad={5}>
                  <LineSample $w={60} />
                </Combo>
                <Divider />
                <Combo label="线宽" value="ByLayer" w={125} pad={5}>
                  <LineSample $w={35} />
                </Combo>
                <Divider />
                <Combo label="打印样式" value="随颜色" w={120} pad={5} size={12} />
              </Toolbar>
            </ToolRow>
            <ToolRow>
              <Toolbar>
                <Tools names="dlinear daligned darc dordinate | dradius djog ddiam dangular | dquick dbase dcont | leader tolerance center | dimedit dimtedit dimupdate |" />
                <Combo label="当前标注样式" value="ISO-25" w={100} />
                <Tools names="dimstyle" />
              </Toolbar>
            </ToolRow>
          </ToolRows>

          <Main>
            <Side>
              <PaletteGroup names={drawTools} />
            </Side>
            <Sheet>
              <Canvas>
                <Strokes aria-hidden="true">
                  <path d="M534.500 87.500L381.500 208.500 577.500 322.500" fill="none" stroke="#fff" shapeRendering="crispEdges" />
                </Strokes>
                <Ucs width="100" height="100" aria-hidden="true">
                  <g fill="none" stroke="#fff">
                    <path d="M9.500 79.500h9v9h-9zM19 83.500h40M14.500 79V39" />
                    <path d="M59.500 79.500l11 4-11 4zM59.500 82l8 1.500-8 1.500M10.500 38.500l4-11 4 11zM13 38.500l1.500-8 1.500 8" />
                    <path d="M81.500 78l8 12M89.500 78l-8 12M12.500 7l4 6 4-6M16.500 13v6" />
                  </g>
                </Ucs>
                <DynField $active aria-label="X" defaultValue="1173.7343" />
                <DynField aria-label="Y" defaultValue="944.7925" />
                <ContextMenu role="menu">
                  {contextGroups.map((group, g) => (
                    <React.Fragment key={g}>
                      {g > 0 && <ContextRule />}
                      {group.map((it) => (
                        <ContextItem key={it.text} role="menuitem">
                          {it.icon ? <Icon name={it.icon} /> : <i />}
                          <span>
                            {it.text}
                            {it.key && <>({it.plainKey ? it.key : <u>{it.key}</u>})</>}
                          </span>
                          {it.sub && (
                            <svg width="5" height="12" aria-hidden="true"><path d="M0 0l5 3.500L0 7z" /></svg>
                          )}
                        </ContextItem>
                      ))}
                    </React.Fragment>
                  ))}
                </ContextMenu>
              </Canvas>
              <TabRow>
                {navShapes.map((d) => (
                  <NavButton key={d} aria-label="布局导航">
                    <svg width="12" height="11"><path d={d} /></svg>
                  </NavButton>
                ))}
                <TabList>
                  <SheetTab text="模型" w={37} on />
                  <SheetTab text="布局1" w={42} />
                  <SheetTab text="布局2" w={42} />
                </TabList>
              </TabRow>
            </Sheet>
            <Side>
              <PaletteGroup right names={modifyTools} />
              <PaletteGroup right names={orderTools} />
            </Side>
          </Main>

          <Splitter />
          <CommandArea>
            <CommandGrip />
            <CommandBox>
              <CommandText>
                <Song text="命令: xl" size={13} />
              </CommandText>
              <ScrollStack>
                <Chevron turn={180} color="#606060" size={10} />
                <Chevron color="#606060" size={10} />
              </ScrollStack>
              <InputRow>
                <CommandText $input>
                  <Song text="XLINE 指定点或 [水平(H)/垂直(V)/角度(A)/二等分(B)/偏移(O)]:" size={13} />
                </CommandText>
                <HScroll>
                  <Chevron turn={-90} color="#606060" size={10} />
                </HScroll>
              </InputRow>
            </CommandBox>
          </CommandArea>
          <StatusBar>
            <Coordinates>
              <Latin $size={10}>1173.7343, 944.7925 , 0.0000</Latin>
            </Coordinates>
            {statusModes.map((m) => (
              <StatusButton key={m.text} $w={m.w} $on={m.on}>
                <Song text={m.text} size={10} />
              </StatusButton>
            ))}
          </StatusBar>
        </Window>

        <Meter />
        <TrayBox width="90" height="7" aria-hidden="true">
          <path d="M3.500 7V.500h43V7" fill="none" stroke="#a0a0a0" />
          <circle cx="38" cy="6" r="4" fill="#e5c520" stroke="#6b5b08" />
          <path d="M70 7V1.500h14V7" fill="#e4edf6" stroke="#1f4e79" strokeWidth="1.500" />
        </TrayBox>
        <ImeBar>
          <svg width="194" height="10" aria-hidden="true">
            <path d="M-33-1l20-3 4 14h-22z" fill="#f0592a" />
            <path d="M-15 2c-5-2-12-1-12 2s10 1 11 5" stroke="#fff" strokeWidth="3" fill="none" />
            <g fill="none" stroke="#1b75c9" strokeWidth="1.800">
              <path d="M0 6.500h13M4 4v5M9 4v5M1 10h11M6.500 6v4" />
              <path d="M33 5c2 2 1 4-2 6M46 8h4" />
              <circle cx="72" cy="11" r="7" />
              <path d="M69 8v2M75 8v2M109 10V6h14v4M112 9h2M116 9h2M120 9h2" />
            </g>
            <path d="M92 4a3 3 0 0 1 6 0v6h-6zM154 5l4 1h4l4-1 4 4v2h-18zM176 5h6v6h-6z" fill="#1b75c9" />
            <path d="M184.500 5.500h6V11h-6z" fill="none" stroke="#1b75c9" />
            <circle cx="139" cy="6" r="2.500" fill="#bfc3c8" />
          </svg>
        </ImeBar>
        <Balloon>
          <BalloonHead>
            <svg width="16" height="16" aria-hidden="true">
              <circle cx="8" cy="8" r="7" fill="#2448b8" stroke="#8ea4dc" />
              <path d="M7 7h2v5M8 3v2" stroke="#fff" strokeWidth="2" fill="none" />
            </svg>
            <strong>通讯中心</strong>
            <BalloonClose aria-label="关闭">
              <svg width="10" height="10"><path d="M1 1l8 8M9 1L1 9" stroke="#000" strokeWidth="2" /></svg>
            </BalloonClose>
          </BalloonHead>
          <BalloonText>使软件保持最新的简单方法。</BalloonText>
          <BalloonText>
            <BalloonLink href="#update">单击此处。</BalloonLink>
          </BalloonText>
          <BalloonTail width="22" height="18" aria-hidden="true">
            <path d="M1 0l17 16V0" fill="#ffffe1" stroke="#000" strokeWidth="1.600" />
            <path d="M0 0h19" stroke="#ffffe1" strokeWidth="1" />
          </BalloonTail>
        </Balloon>
        <Watermark width="256" height="130" viewBox="1044 566 256 130" aria-hidden="true">
          <g fill="#fff" fillOpacity=".7" stroke="#777" strokeOpacity=".22">
            <ellipse cx="1141" cy="600" rx="9" ry="12" />
            <ellipse cx="1158" cy="583" rx="9" ry="12" />
            <ellipse cx="1180" cy="584" rx="9" ry="12" />
            <ellipse cx="1193" cy="605" rx="9" ry="12" />
            <path d="M1167 602c10 0 15 12 23 18 12 10 10 28-5 29-8 0-10-2-18-2s-10 2-18 2c-15-1-17-19-5-29 8-6 13-18 23-18z" fillOpacity=".55" />
            <text x="1047" y="644" fontFamily="Liberation Sans, sans-serif" fontWeight="700" fontSize="54">Bai</text>
            <text x="1206" y="642" fontFamily="Noto Sans CJK SC, sans-serif" fontWeight="700" fontSize="41">经验</text>
            <text x="1051" y="678" fontFamily="Liberation Sans, sans-serif" fontSize="30">jingyan.baidu.com</text>
          </g>
        </Watermark>
      </Desktop>
    </>
  );
}
